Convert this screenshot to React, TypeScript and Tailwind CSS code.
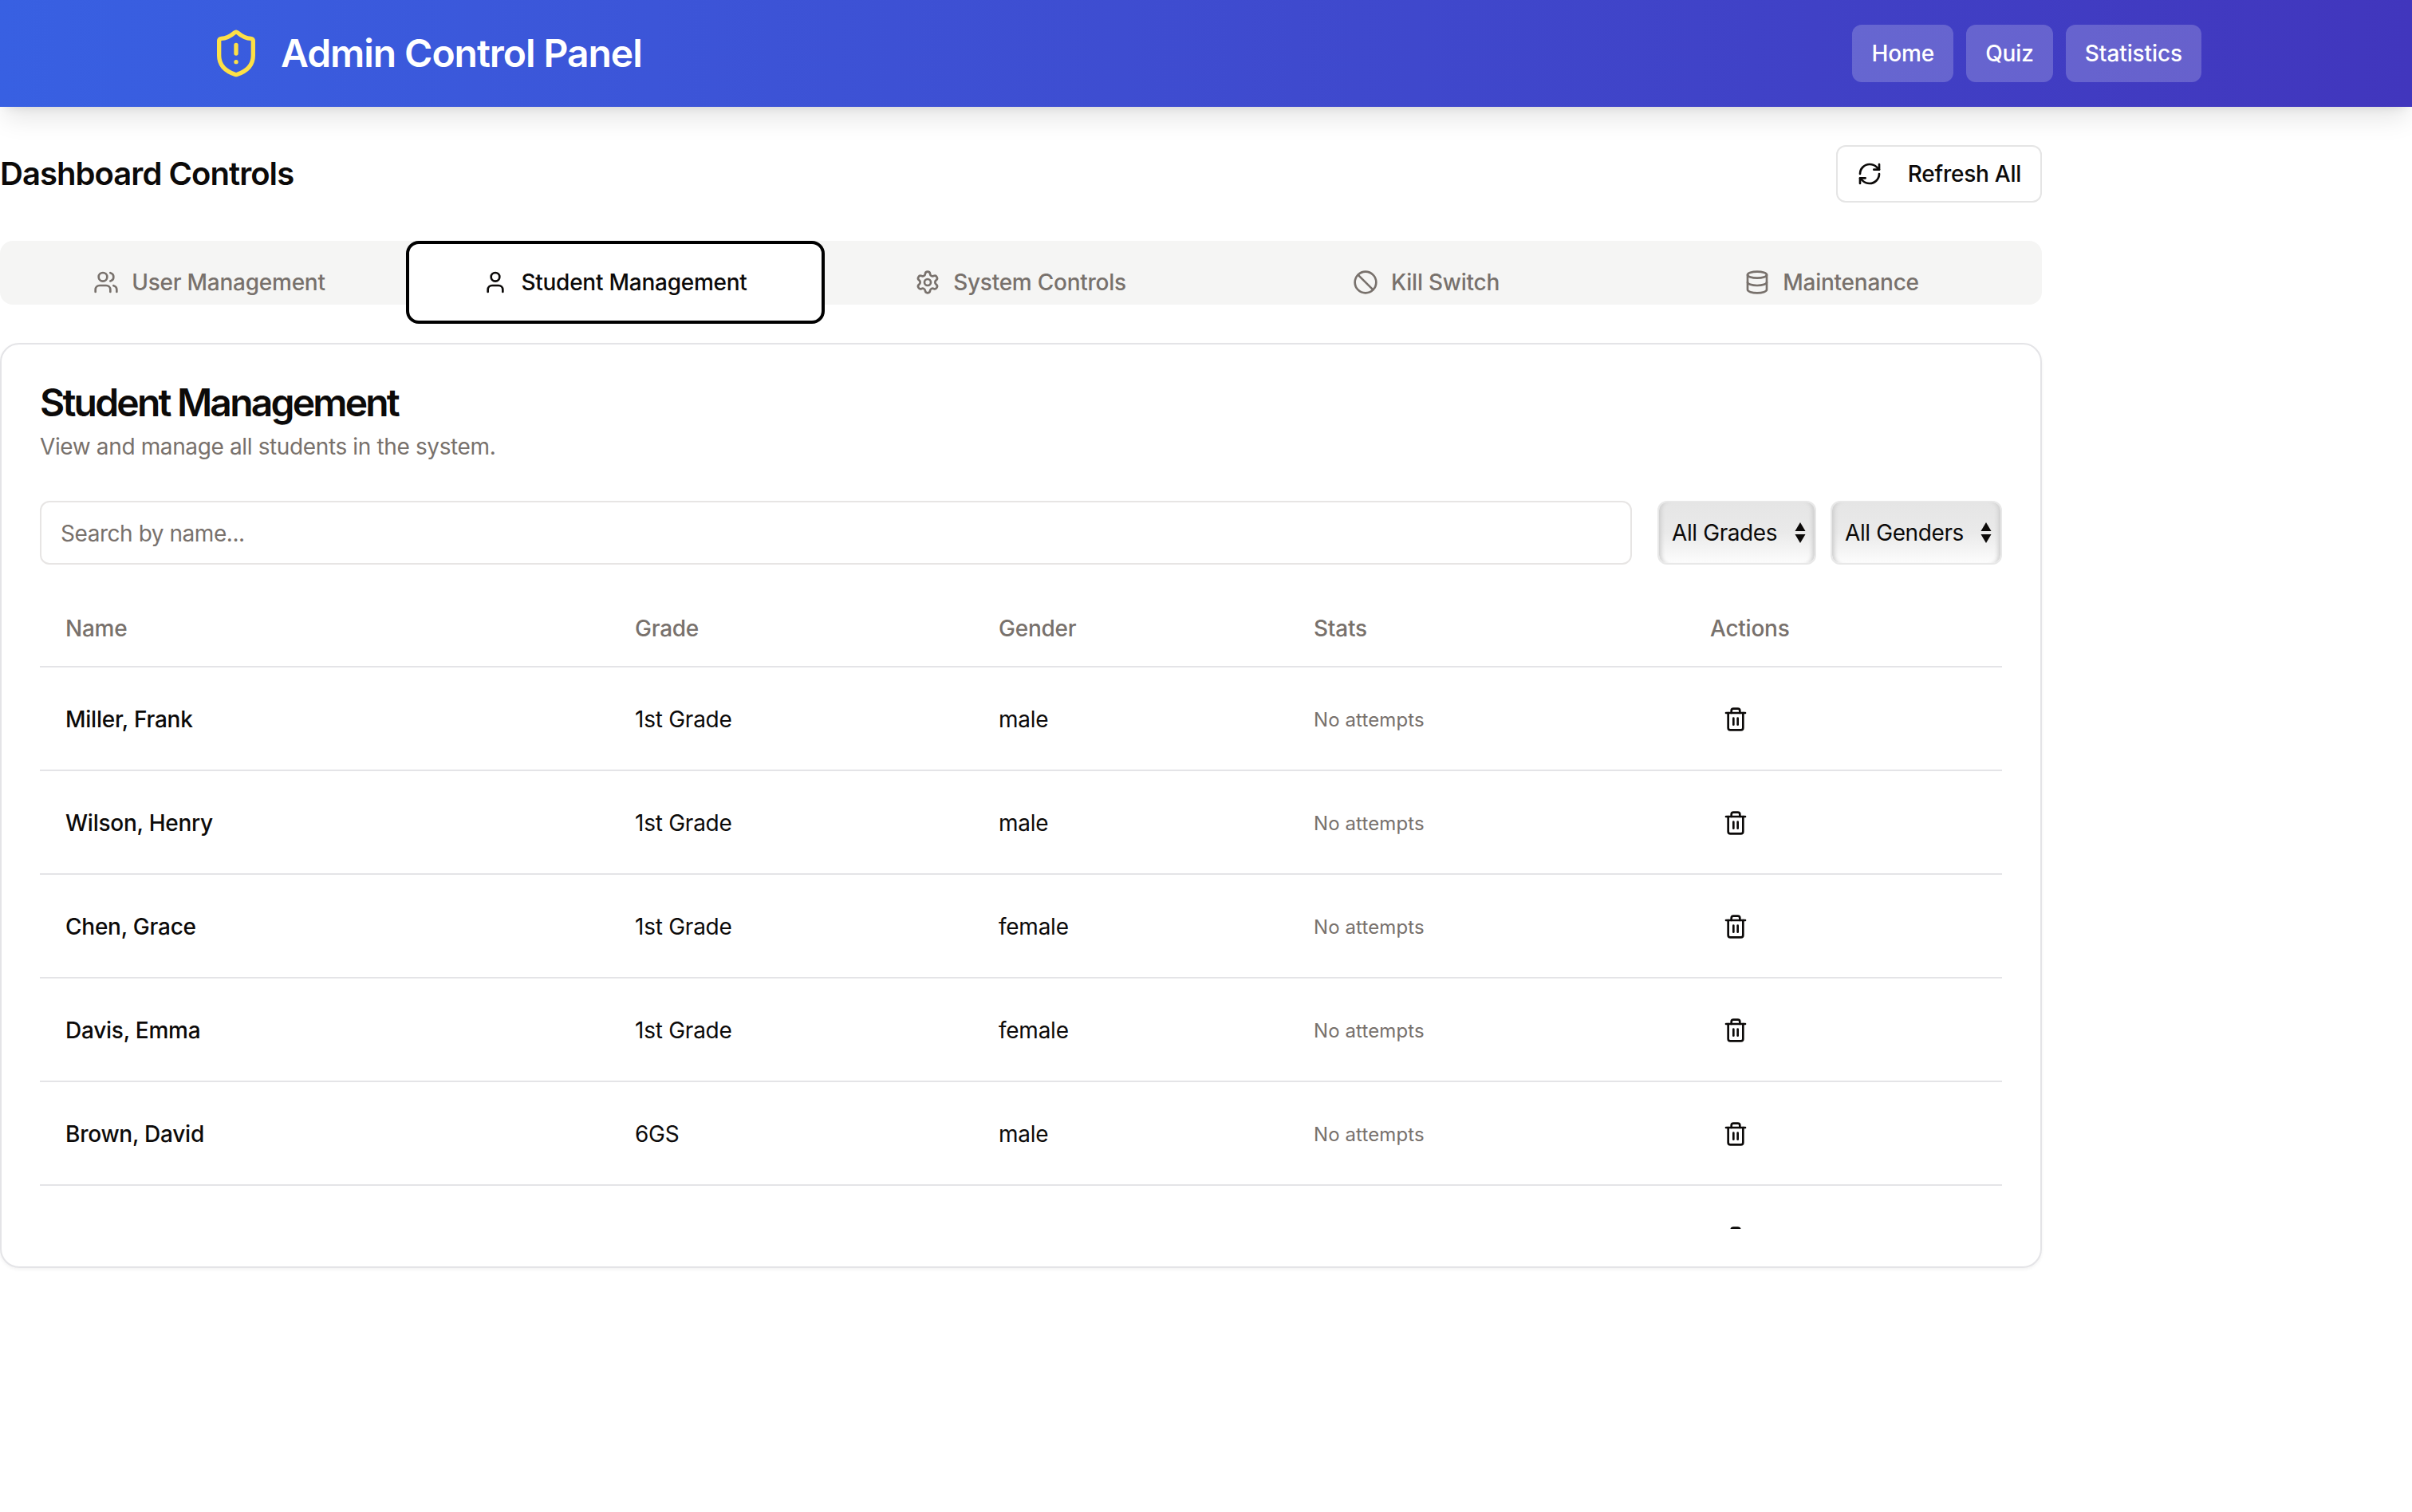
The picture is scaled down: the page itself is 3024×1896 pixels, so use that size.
import { Ban, Database, RefreshCw, Settings, ShieldAlert, Trash2, User, Users } from "lucide-react";

const tabs = [
  { label: "User Management", icon: Users },
  { label: "Student Management", icon: User, active: true },
  { label: "System Controls", icon: Settings },
  { label: "Kill Switch", icon: Ban },
  { label: "Maintenance", icon: Database },
];

const students = [
  { name: "Miller, Frank", grade: "1st Grade", gender: "male" },
  { name: "Wilson, Henry", grade: "1st Grade", gender: "male" },
  { name: "Chen, Grace", grade: "1st Grade", gender: "female" },
  { name: "Davis, Emma", grade: "1st Grade", gender: "female" },
  { name: "Brown, David", grade: "6GS", gender: "male" },
];

function FilterSelect({ label, width }: { label: string; width: string }) {
  return (
    <div className={`relative h-[80px] ${width}`}>
      <select className="h-full w-full appearance-none rounded-xl border-2 border-[#e8e8e8] bg-[linear-gradient(180deg,#e5e5e5_0%,#eaeaea_50%,#fcfcfc_100%)] pl-4 text-[28px] tracking-[-0.4px] text-[#0c0a09] shadow-[inset_7px_0_5px_-4px_#cfcfcf,inset_-7px_0_5px_-4px_#cfcfcf] outline-none">
        <option>{label}</option>
      </select>
      <svg className="pointer-events-none absolute top-[27px] right-[13px] h-[26px] w-[14px]" viewBox="0 0 14 26" fill="#0c0a09">
        <path d="M7 0l6.5 11H.5z" />
        <path d="M7 26l6.5-11H.5z" />
      </svg>
    </div>
  );
}

export default function App() {
  return (
    <div className="min-h-screen bg-white font-[Inter,sans-serif] text-[#0c0a09]">
      <header className="flex h-[134px] items-center justify-between bg-gradient-to-r from-[#3860e2] to-[#4136bd] pr-[264px] pl-[264px] shadow-[0_20px_30px_-6px_rgba(0,0,0,0.1),0_8px_12px_-8px_rgba(0,0,0,0.1)]">
        <div className="flex items-center gap-6">
          <ShieldAlert className="h-16 w-16 text-[#fde047]" />
          <h1 className="text-5xl font-semibold tracking-[-1.05px] text-white">Admin Control Panel</h1>
        </div>
        <nav className="flex gap-4">
          {["Home", "Quiz", "Statistics"].map((item) => (
            <button key={item} className="h-[72px] rounded-xl bg-white/20 px-6 text-[28px] font-medium tracking-[-0.1px] text-white">
              {item}
            </button>
          ))}
        </nav>
      </header>

      <main className="w-[2560px]">
        <div className="flex items-center justify-between pt-12">
          <h2 className="text-[40px] font-semibold tracking-[-0.95px]">Dashboard Controls</h2>
          <button className="flex h-[72px] items-center gap-8 rounded-xl border-2 border-[#e5e5e5] bg-white px-6 text-[28px] font-medium tracking-[-0.25px]">
            <RefreshCw className="h-8 w-8" />
            Refresh All
          </button>
        </div>

        <div className="mt-12 flex h-20 items-start rounded-2xl bg-[#f5f5f4]">
          {tabs.map((tab, i) => (
            <button
              key={tab.label}
              className={`flex h-[104px] w-[525px] shrink-0 items-center justify-center gap-4 rounded-2xl text-[28px] font-medium tracking-[-0.25px] ${i > 0 ? "-ml-[16.5px]" : ""} ${
                tab.active ? "relative border-4 border-black bg-white text-[#0c0a09]" : "text-[#78716c]"
              }`}
            >
              <tab.icon className="h-8 w-8" />
              {tab.label}
            </button>
          ))}
        </div>

        <section className="mt-12 h-[1160px] rounded-3xl border-2 border-[#e4e4e7] bg-white p-12 shadow-[0_2px_4px_rgba(0,0,0,0.05)]">
          <h3 className="text-5xl leading-[50px] font-semibold tracking-[-2.8px]">Student Management</h3>
          <p className="mt-[10px] text-[28px] leading-10 tracking-[-0.37px] text-[#78716c]">View and manage all students in the system.</p>

          <div className="mt-12 flex gap-8">
            <input
              placeholder="Search by name..."
              className="h-20 min-w-0 flex-1 rounded-xl border-2 border-[#e7e5e4] bg-white px-6 pt-[2px] text-[28px] tracking-[-0.45px] outline-none placeholder:text-[#78716c]"
            />
            <div className="flex gap-[18px]">
              <FilterSelect label="All Grades" width="w-[199px]" />
              <FilterSelect label="All Genders" width="w-[215px]" />
            </div>
          </div>

          <div className="mt-8 h-[801px] overflow-hidden">
            <table className="w-full table-fixed border-collapse text-left text-[28px] tracking-[-0.25px]">
              <thead>
                <tr className="h-[96px] border-b-2 border-[#e4e4e7] text-[#78716c]">
                  <th className="w-[714px] pl-8 font-medium">Name</th>
                  <th className="w-[456px] pl-8 font-medium">Grade</th>
                  <th className="w-[395px] pl-8 font-medium">Gender</th>
                  <th className="w-[497px] pl-8 font-medium">Stats</th>
                  <th className="pl-8 font-medium">Actions</th>
                </tr>
              </thead>
              <tbody>
                {students.map((s) => (
                  <tr key={s.name} className="h-[130px] border-b-2 border-[#e4e4e7]">
                    <td className="pt-[2px] pl-8 font-medium">{s.name}</td>
                    <td className="pt-[2px] pl-8">{s.grade}</td>
                    <td className="pt-[2px] pl-8">{s.gender}</td>
                    <td className="pt-[3px] pl-8 text-2xl tracking-[0.1px] text-[#78716c]">No attempts</td>
                    <td className="pt-[2px] pl-8">
                      <button className="flex h-16 w-16 items-center justify-center">
                        <Trash2 className="h-8 w-8" />
                      </button>
                    </td>
                  </tr>
                ))}
                <tr className="h-[130px]">
                  <td colSpan={4} />
                  <td className="pt-[2px] pl-8">
                    <button className="flex h-16 w-16 items-center justify-center">
                      <Trash2 className="h-8 w-8" />
                    </button>
                  </td>
                </tr>
              </tbody>
            </table>
          </div>
        </section>
      </main>
    </div>
  );
}
